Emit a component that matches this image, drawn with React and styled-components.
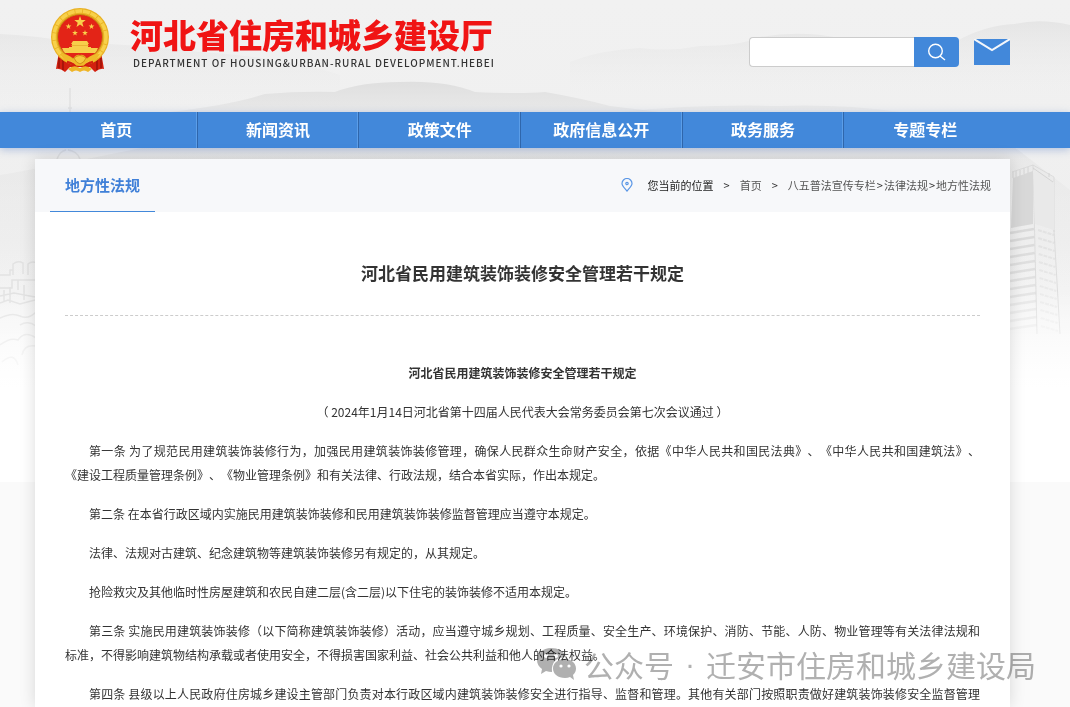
import React from 'react'
import styled, { createGlobalStyle } from 'styled-components'

const menus = ['首页', '新闻资讯', '政策文件', '政府信息公开', '政务服务', '专题专栏']

// every article is a list of lines, full lines are justified
const articles = [
  [
    { text: '第一条 为了规范民用建筑装饰装修行为，加强民用建筑装饰装修管理，确保人民群众生命财产安全，依据《中华人民共和国民法典》、《中华人民共和国建筑法》、', full: true },
    { text: '《建设工程质量管理条例》、《物业管理条例》和有关法律、行政法规，结合本省实际，作出本规定。' },
  ],
  [{ text: '第二条 在本省行政区域内实施民用建筑装饰装修和民用建筑装饰装修监督管理应当遵守本规定。' }],
  [{ text: '法律、法规对古建筑、纪念建筑物等建筑装饰装修另有规定的，从其规定。' }],
  [{ text: '抢险救灾及其他临时性房屋建筑和农民自建二层(含二层)以下住宅的装饰装修不适用本规定。' }],
  [
    { text: '第三条 实施民用建筑装饰装修（以下简称建筑装饰装修）活动，应当遵守城乡规划、工程质量、安全生产、环境保护、消防、节能、人防、物业管理等有关法律法规和', full: true },
    { text: '标准，不得影响建筑物结构承载或者使用安全，不得损害国家利益、社会公共利益和他人的合法权益。' },
  ],
  [{ text: '第四条 县级以上人民政府住房城乡建设主管部门负责对本行政区域内建筑装饰装修安全进行指导、监督和管理。其他有关部门按照职责做好建筑装饰装修安全监督管理', full: true }],
]

const star = (cx, cy, r) => {
  const pts = []
  for (let i = 0; i < 10; i++) {
    const len = i % 2 ? r * 0.4 : r
    const a = (Math.PI / 5) * i - Math.PI / 2
    pts.push(`${(cx + len * Math.cos(a)).toFixed(1)},${(cy + len * Math.sin(a)).toFixed(1)}`)
  }
  return pts.join(' ')
}

const Emblem = () => (
  <svg width="60" height="66" viewBox="0 0 60 66" aria-hidden="true">
    <path d="M9 44 L6 61 Q10 60 15 64 L20 59 H40 L45 64 Q50 60 54 61 L51 44 Z" fill="#d3200f" />
    <path d="M9 50 L9 60 M13 52 L13 62 M51 50 L51 60 M47 52 L47 62" stroke="#8f0f08" strokeWidth="1.2" />
    <circle cx="30" cy="29" r="29" fill="#e9b124" />
    <circle cx="30" cy="29" r="26" fill="none" stroke="#f8d14a" strokeWidth="3.5" strokeDasharray="7 0.8" />
    <circle cx="30" cy="29" r="22.5" fill="#e32417" stroke="#c98a12" strokeWidth="1" />
    <polygon points={star(30, 14, 6)} fill="#f9d04a" />
    <polygon points={star(18.5, 18.5, 3)} fill="#f9d04a" />
    <polygon points={star(41.5, 18.5, 3)} fill="#f9d04a" />
    <polygon points={star(25, 25, 3)} fill="#f9d04a" />
    <polygon points={star(35, 25, 3)} fill="#f9d04a" />
    <path d="M23 33 H37 L39 36 H21 Z M22 36 H38 V39 H41 V44 H19 V39 H22 Z" fill="#f7cf4b" />
    <path d="M21 37.5 H39 M19 41 H41" stroke="#dfa325" strokeWidth="0.6" />
    <path d="M12 40 H48 Q47 43 45 45 H15 Q13 43 12 40 Z" fill="#f7cf4b" />
    <path d="M10 46 Q19 46 23 51 Q26 46 30 47 Q34 46 37 51 Q41 46 50 46 L45 53 Q37 52 35 57 H25 Q23 52 15 53 Z" fill="#f0b929" />
    <path d="M24 50 Q30 45 36 50 Q34 55 30 56 Q26 55 24 50 Z" fill="#f5c93e" stroke="#c98210" strokeWidth="0.8" />
    <path d="M17 54 Q24 55 27 61 M43 54 Q36 55 33 61" stroke="#d3200f" strokeWidth="2.5" fill="none" />
    <path d="M18 61 Q24 56 30 60 Q36 56 42 61 L38 64 Q34 61 30 64 Q26 61 22 64 Z" fill="#efb527" />
  </svg>
)

const Tower = ({ x }) => (
  <g transform={`translate(${x} 0)`} stroke="#d4d4d4" fill="none">
    <path d="M12 172 L33 165 L54 177 V232 M33 165 L37 334 M54 230 L60 334" opacity="0.7" />
    <path d="M13 178 L33 171 L33 224 L11 228 Z" fill="#d8d8d8" stroke="none" />
    <path d="M33 170 L54 182 L54 230 L35 224 Z" fill="#e9e9e9" stroke="none" />
    <path d="M13 172 V178 M16 171 V177 M20 170 V176 M24 168 V174 M28 167 V173" />
    <path d="M33 168 L53 182 M49 173 V177" />
    {Array.from({ length: 13 }, (_, i) => (
      <path
        key={i}
        d={`M10 ${233 + i * 8} L${34 + i / 4} ${229 + i * 8}`}
        strokeWidth="2.5"
        opacity={0.8 - i * 0.04}
      />
    ))}
    {Array.from({ length: 13 }, (_, i) => (
      <path
        key={i}
        d={`M${38 + i / 4} ${230 + i * 8} L${54 + i / 3} ${235 + i * 8}`}
        strokeWidth="2"
        strokeDasharray="4 1"
        opacity={0.45 - i * 0.02}
      />
    ))}
  </g>
)

const Scenery = () => (
  <Backdrop viewBox="0 0 1070 482" preserveAspectRatio="xMidYMin slice" aria-hidden="true">
    <defs>
      <linearGradient id="sky" x1="0" y1="0" x2="0" y2="1">
        <stop offset="0" stopColor="#f1f1f1" />
        <stop offset="0.5" stopColor="#efefef" />
        <stop offset="0.9" stopColor="#ffffff" />
      </linearGradient>
      <linearGradient id="hill" x1="0" y1="0" x2="0" y2="1">
        <stop offset="0" stopColor="#dcdcdc" />
        <stop offset="1" stopColor="#ececec" stopOpacity="0" />
      </linearGradient>
      <linearGradient id="fog" x1="0" y1="0" x2="0" y2="1">
        <stop offset="0" stopColor="#ffffff" stopOpacity="0" />
        <stop offset="1" stopColor="#ffffff" />
      </linearGradient>
    </defs>
    <rect width="1070" height="482" fill="url(#sky)" />
    <path d="M0 34 Q40 36 70 42 Q130 44 200 52 Q290 58 340 75 V110 H0 Z" fill="url(#hill)" opacity="0.4" />
    <path d="M570 62 Q600 50 640 48 Q670 52 700 46 Q740 46 760 37 Q800 30 840 38 Q900 52 955 42 Q985 25 1015 24 Q1040 18 1070 25 V95 H570 Z" fill="url(#hill)" opacity="0.55" />
    <path d="M170 112 Q230 105 265 94 Q300 91 335 92 Q360 82 400 82 Q445 80 475 92 Q520 94 545 92 Q580 98 610 106 L660 112 V165 H170 Z" fill="url(#hill)" opacity="0.85" />
    <path d="M620 112 Q700 104 780 106 Q840 104 900 112 V140 H620 Z" fill="url(#hill)" opacity="0.4" />
    <path d="M0 175 Q60 165 200 136 H1000 L1070 190 V290 H0 Z" fill="url(#hill)" opacity="0.45" />
    <path d="M70 88 V146 M68 108 H72 M66 150 Q60 151 57 159 M68 150 Q77 151 80 159" stroke="#d4d4d4" strokeWidth="1.5" fill="none" opacity="0.5" />
    <path
      d="M0 275 H10 V270 H13 M13 275 V264 Q18 260 23 263 V274 M28 275 V264 Q33 260 38 264 M0 288 H12 V280 H35 M0 296 L14 293 L35 297 M0 303 L8 300 L20 304 L35 300 M4 290 V301 M10 287 V303 M24 285 V300 M18 280 V290 M0 318 Q12 312 20 316 T36 312 M0 345 Q10 337 18 340 Q25 330 36 338 M22 355 Q24 344 36 346 M2 362 Q14 351 18 365 M20 325 Q28 320 36 326"
      stroke="#e2e2e2"
      strokeWidth="1.5"
      fill="none"
    />
    <Tower x={1000} />
    <rect x="0" y="290" width="1070" height="100" fill="url(#fog)" />
    <rect x="0" y="389" width="1070" height="93" fill="#ffffff" />
  </Backdrop>
)

const App = () => {
  return (
    <>
      <GlobalStyle />
      <Page>
        <Scenery />
        <Header>
          <Logo href="#">
            <Emblem />
            <LogoText>
              <SiteName>河北省住房和城乡建设厅</SiteName>
              <SiteNameEn>DEPARTMENT OF HOUSING&amp;URBAN-RURAL DEVELOPMENT.HEBEI</SiteNameEn>
            </LogoText>
          </Logo>
          <Tools>
            <SearchForm role="search" onSubmit={(e) => e.preventDefault()}>
              <SearchInput type="text" aria-label="搜索" />
              <SearchButton type="submit" aria-label="搜索">
                <svg width="18" height="18" viewBox="0 0 18 18" fill="none" stroke="#fff" strokeWidth="1.4">
                  <circle cx="7.5" cy="8" r="6.8" />
                  <path d="M12 13 L17 17" />
                </svg>
              </SearchButton>
            </SearchForm>
            <MailLink href="#" aria-label="邮箱">
              <svg width="36" height="26" viewBox="0 0 36 26">
                <rect width="36" height="26" fill="#4288da" />
                <path d="M0 0 L18 11 L36 0" fill="none" stroke="#f4f7fb" strokeWidth="2" />
              </svg>
            </MailLink>
          </Tools>
        </Header>
        <Nav>
          {menus.map((menu) => (
            <NavItem href="#" key={menu}>{menu}</NavItem>
          ))}
        </Nav>
        <Card>
          <CardHead>
            <CardTab>地方性法规</CardTab>
            <Crumbs>
              <svg width="12" height="14" viewBox="0 0 12 14" fill="none" stroke="#5b97e6" strokeWidth="1.2">
                <path d="M6 13 C3 9.5 1 8 1 5.5 A5 5 0 0 1 11 5.5 C11 8 9 9.5 6 13 Z" />
                <circle cx="6" cy="5.5" r="1.2" />
              </svg>
              <Here>您当前的位置</Here>
              <span>&gt;</span>
              <Crumb href="#">首页</Crumb>
              <span>&gt;</span>
              <CrumbPath>
                <Crumb href="#">八五普法宣传专栏</Crumb>
                <span>&gt;</span>
                <Crumb href="#">法律法规</Crumb>
                <span>&gt;</span>
                <Crumb href="#">地方性法规</Crumb>
              </CrumbPath>
            </Crumbs>
          </CardHead>
          <Article>
            <Title>河北省民用建筑装饰装修安全管理若干规定</Title>
            <Content>
              <CenterText $bold>河北省民用建筑装饰装修安全管理若干规定</CenterText>
              <CenterText>（ 2024年1月14日河北省第十四届人民代表大会常务委员会第七次会议通过 ）</CenterText>
              {articles.map((lines, i) => (
                <Paragraph key={i}>
                  {lines.map((line) => (
                    <Line key={line.text} $full={line.full}>{line.text}</Line>
                  ))}
                </Paragraph>
              ))}
            </Content>
          </Article>
        </Card>
        <Watermark>
          <svg width="42" height="34" viewBox="0 0 42 34">
            <path d="M15 1 C7 1 1 6 1 13 C1 17 3 20 6 22 L5 27 L10 24 Q13 25 16 25 C15 15 21 10 30 10 C28 4 22 1 15 1 Z" fill="#b0b0b0" />
            <circle cx="10" cy="9" r="2" fill="#fff" />
            <circle cx="20" cy="9" r="2" fill="#fff" />
            <path d="M29 12 C22 12 17 16 17 21.5 C17 27 22 31 29 31 Q32 31 34 30 L38 33 L37 28 C39 26 40 24 40 21.5 C40 16 35 12 29 12 Z" fill="#b0b0b0" />
            <circle cx="25" cy="19" r="1.6" fill="#fff" />
            <circle cx="33" cy="19" r="1.6" fill="#fff" />
          </svg>
          <WatermarkText>
            公众号<Dot>·</Dot>迁安市住房和城乡建设局
          </WatermarkText>
        </Watermark>
      </Page>
    </>
  )
}

const GlobalStyle = createGlobalStyle`
  * {
    box-sizing: border-box;
  }
  body {
    margin: 0;
    font-family: "Noto Sans CJK SC", sans-serif;
    font-size: 12px;
    color: #333;
    background-color: #fafafa;
    text-spacing-trim: space-all;
  }
  a {
    text-decoration: none;
  }
`;

const Page = styled.div`
  position: relative;
  display: flex;
  flex-direction: column;
  min-height: 100vh;
  overflow: hidden;
`;

const Backdrop = styled.svg`
  position: absolute;
  top: 0;
  left: 0;
  z-index: -1;
  width: 100%;
  height: 482px;
`;

const Header = styled.header`
  display: flex;
  justify-content: space-between;
  align-items: flex-start;
  height: 112px;
  padding: 8px 60px 0 50px;
`;

const Logo = styled.a`
  display: flex;
  gap: 20px;
`;

const LogoText = styled.div`
  display: flex;
  flex-direction: column;
  padding-top: 6px;
  white-space: nowrap;
`;

const SiteName = styled.h1`
  margin: 0;
  font-size: 33px;
  line-height: 40px;
  font-weight: 900;
  color: #f01414;
`;

const SiteNameEn = styled.span`
  padding-left: 3px;
  font-size: 10px;
  line-height: 18px;
  font-weight: 500;
  letter-spacing: 1px;
  color: #333;
`;

const Tools = styled.div`
  display: flex;
  align-items: center;
  gap: 15px;
  padding-top: 29px;
`;

const SearchForm = styled.form`
  display: flex;
  height: 30px;
`;

const SearchInput = styled.input`
  width: 165px;
  padding: 0 10px;
  border: 1px solid #ccc;
  border-right: none;
  border-radius: 4px 0 0 4px;
  background-color: #fff;
  outline: none;
`;

const SearchButton = styled.button`
  display: flex;
  justify-content: center;
  align-items: center;
  width: 45px;
  padding: 0;
  border: none;
  border-radius: 0 4px 4px 0;
  background-color: #4288da;
  cursor: pointer;
`;

const MailLink = styled.a`
  display: flex;
`;

const Nav = styled.nav`
  display: grid;
  grid-template-columns: repeat(6, 1fr);
  padding: 0 64px 0 36px;
  background-color: #4288da;
  box-shadow: 0 2px 8px rgba(66, 110, 190, 0.35);
`;

const NavItem = styled.a`
  height: 36px;
  line-height: 34px;
  border-right: 1px solid #2f66ab;
  box-shadow: inset -1px 0 0 #5c9ee8;
  font-size: 16px;
  font-weight: bold;
  text-align: center;
  color: #fff;
  &:last-child {
    border-right: none;
    box-shadow: none;
  }
`;

const Card = styled.main`
  display: flex;
  flex-direction: column;
  flex: 1;
  margin: 11px 60px 0 35px;
  background-color: #fff;
  box-shadow: 0 0 15px rgba(0, 0, 0, 0.14);
`;

const CardHead = styled.div`
  display: flex;
  justify-content: space-between;
  height: 53px;
  padding: 0 19px 0 15px;
  background-color: #f7f8fa;
`;

const CardTab = styled.h2`
  margin: 0;
  padding: 0 15px;
  border-bottom: 1px solid #4288da;
  font-size: 15px;
  line-height: 52px;
  font-weight: bold;
  color: #4080d8;
`;

const Crumbs = styled.div`
  display: flex;
  align-items: center;
  gap: 10px;
  padding-bottom: 2px;
  font-size: 11px;
  color: #333;
`;

const Here = styled.span`
  padding-left: 5px;
  color: #222;
`;

const CrumbPath = styled.span`
  display: flex;
  gap: 1px;
`;

const Crumb = styled.a`
  color: #555;
`;

const Article = styled.article`
  padding: 0 30px;
`;

const Title = styled.h2`
  margin: 0;
  padding: 47px 0 28px;
  border-bottom: 1px dashed #ccc;
  font-size: 17px;
  line-height: 28px;
  font-weight: bold;
  text-align: center;
`;

const Content = styled.div`
  padding-top: 45px;
  line-height: 24px;
`;

const CenterText = styled.p`
  margin: 0 0 15px;
  text-align: center;
  font-weight: ${(props) => (props.$bold ? 'bold' : 'normal')};
`;

const Paragraph = styled.p`
  margin: 0 0 15px;
  &:last-child {
    margin-bottom: 0;
  }
`;

const Line = styled.span`
  display: block;
  text-align: justify;
  text-align-last: ${(props) => (props.$full ? 'justify' : 'left')};
  &:first-child {
    padding-left: 24px;
  }
`;

const Watermark = styled.div`
  position: absolute;
  right: 34px;
  bottom: 23px;
  display: flex;
  align-items: center;
  gap: 6px;
  mix-blend-mode: multiply;
  pointer-events: none;
`;

const WatermarkText = styled.span`
  display: flex;
  font-size: 30px;
  line-height: 40px;
  color: #b0b0b0;
  white-space: nowrap;
`;

const Dot = styled.span`
  padding: 0 11px;
  font-family: "Liberation Sans", sans-serif;
`;

export default App;
